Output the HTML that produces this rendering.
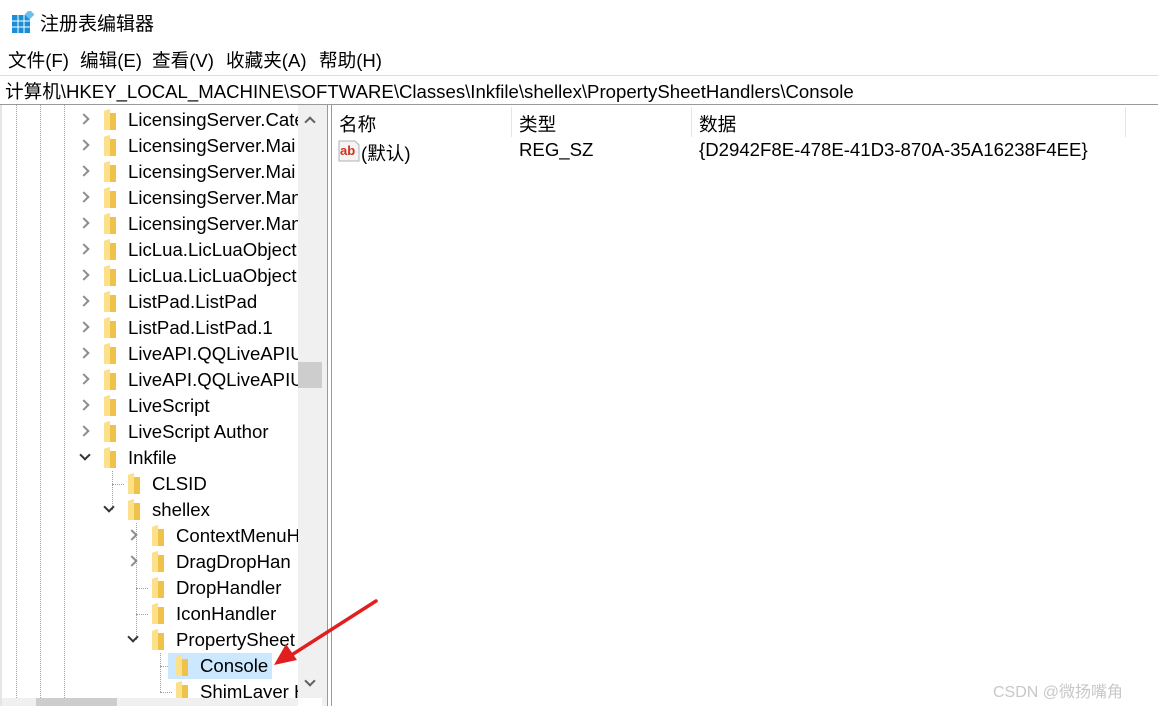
<!DOCTYPE html><html><head><meta charset="utf-8"><style>
*{margin:0;padding:0;box-sizing:border-box}
body{width:1158px;height:706px;overflow:hidden;background:#fff;font-family:"Liberation Sans","Noto Sans CJK SC",sans-serif;font-size:18.6px;color:#000;position:relative}
.a{position:absolute;white-space:nowrap}
.r{position:absolute;height:26px;line-height:26px;white-space:nowrap}
.vl{position:absolute;width:0;border-left:1px dotted #a0a0a0}
.hl{position:absolute;height:0;border-top:1px dotted #a0a0a0}
.f{position:absolute;width:14px;height:22px}
.ch{position:absolute;width:8px;height:8px;border-right:2px solid #8c8c8c;border-bottom:2px solid #8c8c8c}
.cr{transform:rotate(-45deg)}
.cd{transform:rotate(45deg);border-color:#333}
</style></head><body>
<svg class="a" style="left:12px;top:11px" width="22" height="22" viewBox="0 0 22 22"><rect x="0" y="4" width="18" height="18" fill="#1a8fd8"/><g stroke="#fff" stroke-width="1"><line x1="6" y1="4" x2="6" y2="22"/><line x1="12" y1="4" x2="12" y2="22"/><line x1="0" y1="10" x2="18" y2="10"/><line x1="0" y1="16" x2="18" y2="16"/></g><rect x="14" y="0" width="7" height="7" fill="#6cc0ee" transform="rotate(45 17.5 3.5)"/></svg>
<div class="a" style="left:40px;top:9px;font-size:19px">注册表编辑器</div>
<div class="a" style="left:8px;top:46px">文件(F)</div>
<div class="a" style="left:80px;top:46px">编辑(E)</div>
<div class="a" style="left:152px;top:46px">查看(V)</div>
<div class="a" style="left:226px;top:46px">收藏夹(A)</div>
<div class="a" style="left:319px;top:46px">帮助(H)</div>
<div class="a" style="left:0;top:75px;width:1158px;height:30px;border-top:1px solid #ddd;border-bottom:1px solid #999"></div>
<div class="a" style="left:5px;top:77px">计算机\HKEY_LOCAL_MACHINE\SOFTWARE\Classes\Inkfile\shellex\PropertySheetHandlers\Console</div>
<div class="a" style="left:0;top:105px;width:2px;height:601px;background:#e5e5e5"></div>
<div class="a" style="left:322px;top:105px;width:6px;height:601px;background:#f0f0f0;border-right:1px solid #999"></div>
<div class="a" style="left:331px;top:105px;width:1px;height:601px;background:#999"></div>
<div class="a" style="left:298px;top:105px;width:24px;height:593px;background:#f0f0f0"></div>
<div class="ch" style="left:306px;top:118px;transform:rotate(-135deg);border-color:#606060"></div>
<div class="ch" style="left:306px;top:677px;transform:rotate(45deg);border-color:#606060"></div>
<div class="a" style="left:298px;top:362px;width:24px;height:26px;background:#cdcdcd"></div>
<div class="a" style="left:2px;top:698px;width:296px;height:8px;background:#f0f0f0"></div>
<div class="a" style="left:36px;top:698px;width:81px;height:8px;background:#cdcdcd"></div>
<div class="a" style="left:2px;top:105px;width:296px;height:593px;overflow:hidden">
<div class="vl" style="left:14px;top:0;height:593px"></div>
<div class="vl" style="left:38px;top:0;height:593px"></div>
<div class="vl" style="left:62px;top:0;height:593px"></div>
<div class="vl" style="left:110px;top:366px;height:39px"></div>
<div class="vl" style="left:134px;top:418px;height:117px"></div>
<div class="vl" style="left:158px;top:548px;height:39px"></div>
<div class="hl" style="left:110px;top:379px;width:12px"></div>
<div class="hl" style="left:134px;top:483px;width:12px"></div>
<div class="hl" style="left:134px;top:509px;width:12px"></div>
<div class="hl" style="left:158px;top:561px;width:12px"></div>
<div class="hl" style="left:158px;top:587px;width:12px"></div>
<div class="a" style="left:166px;top:548px;width:104px;height:26px;background:#cce8ff"></div>
<svg width="0" height="0" style="position:absolute"><defs><symbol id="fd" viewBox="0 0 14 22"><path d="M1 2 L7 0 L7 4 L13 4 L13 21 L1 21 Z" fill="#f1c24a"/><path d="M1 2 L7 0 L7 21 L1 21 Z" fill="#fde08a"/></symbol></defs></svg>
<div id="t"></div>
</div>
<script>
var items=[["LicensingServer.Categ",1,'r'],["LicensingServer.Mai",1,'r'],["LicensingServer.Mai",1,'r'],["LicensingServer.Man",1,'r'],["LicensingServer.Man",1,'r'],["LicLua.LicLuaObject",1,'r'],["LicLua.LicLuaObject",1,'r'],["ListPad.ListPad",1,'r'],["ListPad.ListPad.1",1,'r'],["LiveAPI.QQLiveAPIU",1,'r'],["LiveAPI.QQLiveAPIU",1,'r'],["LiveScript",1,'r'],["LiveScript Author",1,'r'],["Inkfile",1,'d'],["CLSID",2,''],["shellex",2,'d'],["ContextMenuH",3,'r'],["DragDropHan",3,'r'],["DropHandler",3,''],["IconHandler",3,''],["PropertySheet",3,'d'],["Console",4,''],["ShimLayer H",4,'']];
var h='';items.forEach(function(it,k){var top=2+26*k;var x=(it[1]-1)*24;
if(it[2]=='r')h+='<div class="ch cr" style="left:'+(x+78)+'px;top:'+(top+8)+'px"></div>';
if(it[2]=='d')h+='<div class="ch cd" style="left:'+(x+79)+'px;top:'+(top+6)+'px"></div>';
h+='<svg class="f" style="left:'+(x+101)+'px;top:'+(top+2)+'px"><use href="#fd"/></svg>';
h+='<div class="r" style="left:'+(x+126)+'px;top:'+top+'px">'+it[0]+'</div>';});
document.getElementById('t').innerHTML=h;
</script>
<div class="a" style="left:511px;top:107px;width:1px;height:30px;background:#e5e5e5"></div>
<div class="a" style="left:691px;top:107px;width:1px;height:30px;background:#e5e5e5"></div>
<div class="a" style="left:1125px;top:107px;width:1px;height:30px;background:#e5e5e5"></div>
<div class="a" style="left:339px;top:110px">名称</div>
<div class="a" style="left:519px;top:110px">类型</div>
<div class="a" style="left:699px;top:110px">数据</div>
<svg class="a" style="left:338px;top:140px" width="22" height="22" viewBox="0 0 22 22"><path d="M1 1 H17 L21 5 V21 H1 Z" fill="#f4f4f4" stroke="#b0b0b0"/><text x="2" y="15" font-family="Liberation Sans" font-weight="bold" font-size="13" fill="#d03020">ab</text></svg>
<div class="a" style="left:361px;top:139px">(默认)</div>
<div class="a" style="left:519px;top:139px">REG_SZ</div>
<div class="a" style="left:699px;top:139px">{D2942F8E-478E-41D3-870A-35A16238F4EE}</div>
<svg class="a" style="left:270px;top:595px" width="112" height="75" viewBox="270 595 112 75"><line x1="376" y1="601" x2="290" y2="656" stroke="#e02020" stroke-width="3.5" stroke-linecap="round"/><path d="M274 665 L286 644 L297 660 Z" fill="#e02020"/></svg>
<div class="a" style="left:993px;top:678px;font-size:16px;color:#c8c8c8">CSDN @微扬嘴角</div>
</body></html>
